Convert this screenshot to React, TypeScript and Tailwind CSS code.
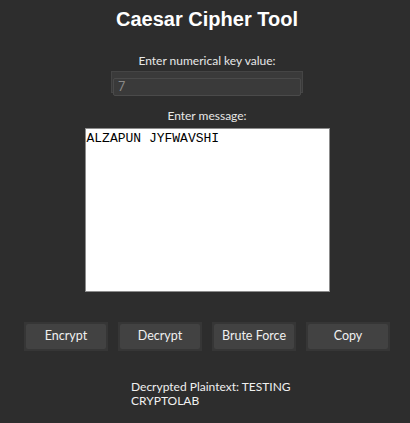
import React, { useState } from 'react';

const shift = (text: string, key: number) =>
    text.replace(/[A-Za-z]/g, (c) => {
        const base = c <= 'Z' ? 65 : 97;
        return String.fromCharCode(((c.charCodeAt(0) - base + key + 26 * 10) % 26) + base);
    });

const ToolButton: React.FC<{ label: string; onClick?: () => void }> = ({ label, onClick }) => (
    <button
        onClick={onClick}
        className="w-[84px] h-[29px] bg-[#363636] p-[2px] focus:outline-none"
    >
        <div className="w-full h-full bg-[#424242] rounded-[2px] flex items-center justify-center text-[12.5px] text-[#f0f0f0]">
            {label}
        </div>
    </button>
);

const App: React.FC = () => {
    const [key, setKey] = useState('7');
    const [message, setMessage] = useState('ALZAPUN JYFWAVSHI');
    const [output, setOutput] = useState('Decrypted Plaintext: TESTING\nCRYPTOLAB');

    const k = parseInt(key, 10) || 0;

    return (
        <div
            className="w-[410px] h-[423px] bg-[#2d2d2d] pl-[4px] flex flex-col items-center overflow-hidden"
            style={{ fontFamily: 'Lato, "Open Sans", sans-serif' }}
        >
            <h1
                className="mt-[7px] text-[20px] leading-[24px] font-bold text-white"
                style={{ fontFamily: '"Liberation Sans", Arial, sans-serif' }}
            >
                Caesar Cipher Tool
            </h1>

            <label className="mt-[22px] text-[12px] leading-[16px] text-[#e8e8e8]">
                Enter numerical key value:
            </label>
            <div className="mt-[2px] w-[192px] h-[22px] bg-[#3a3a3a] border border-[#454545] p-[1px]">
                <input
                    value={key}
                    onChange={(e) => setKey(e.target.value)}
                    className="w-full h-full bg-[#3a3a3a] border border-[#4a4a4a] rounded-[2px] px-[4px] text-[12.5px] text-[#8a8a8a] outline-none"
                />
            </div>

            <label className="mt-[15px] text-[12px] leading-[16px] text-[#e8e8e8]">
                Enter message:
            </label>
            <textarea
                value={message}
                onChange={(e) => setMessage(e.target.value)}
                spellCheck={false}
                className="mt-[4px] w-[245px] h-[164px] bg-white border border-[#8c8c8c] px-[1px] py-[2px] text-[13px] leading-[15px] text-black resize-none outline-none"
                style={{ fontFamily: '"Liberation Mono", "Courier New", monospace' }}
            />

            <div className="mt-[30px] flex gap-[10px]">
                <ToolButton label="Encrypt" onClick={() => setOutput('Encrypted Ciphertext: ' + shift(message, k))} />
                <ToolButton label="Decrypt" onClick={() => setOutput('Decrypted Plaintext: ' + shift(message, -k))} />
                <ToolButton label="Brute Force" />
                <ToolButton label="Copy" />
            </div>

            <p className="mt-[29px] w-[152px] text-[12px] leading-[14px] text-[#f0f0f0] whitespace-pre">
                {output}
            </p>
        </div>
    );
};

export default App;
